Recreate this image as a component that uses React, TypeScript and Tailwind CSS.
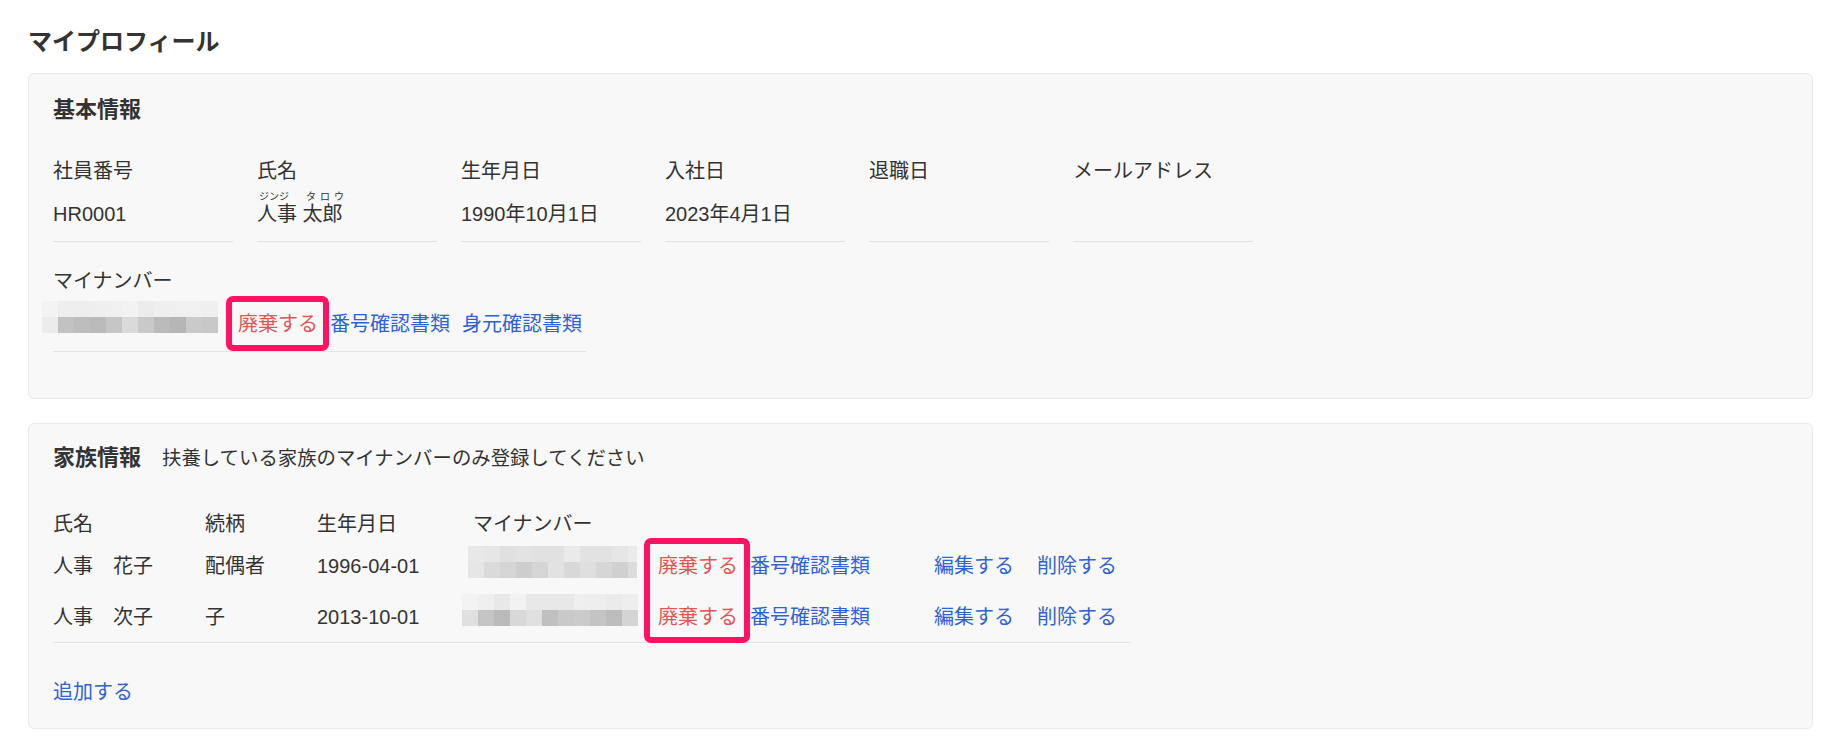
import React from "react";

const blurA = {
  top: ["#f3f3f3", "#eeeeee", "#eeeeee", "#efefef", "#f0f0f0", "#f2f2f2", "#ececec", "#efefef", "#f0f0f0", "#f0f0f0", "#efefef"],
  bottom: ["#ececec", "#c2c2c2", "#bdbdbd", "#bababa", "#c6c6c6", "#dadada", "#c9c9c9", "#bbbbbb", "#b6b6b6", "#cacaca", "#c8c8c8"],
  last: 16,
};
const blurB = {
  top: ["#e8e8e8", "#e6e6e6", "#e0e0e0", "#e3e3e3", "#e1e1e1", "#e1e1e1", "#eaeaea", "#e2e2e2", "#e2e2e2", "#e6e6e6", "#ebebeb"],
  bottom: ["#e6e6e6", "#dadada", "#d5d5d5", "#cdcdcd", "#d5d5d5", "#e2e2e2", "#d8d8d8", "#dfdfdf", "#d6d6d6", "#d0d0d0", "#dcdcdc"],
  last: 9,
};
const blurC = {
  top: ["#f3f3f3", "#efefef", "#e8e8e8", "#f2f2f2", "#e8e8e8", "#e8e8e8", "#e8e8e8", "#efefef", "#eeeeee", "#ebebeb", "#eeeeee"],
  bottom: ["#e0e0e0", "#c5c5c5", "#bababa", "#d8d8d8", "#e0e0e0", "#c0c0c0", "#c9c9c9", "#cbcbcb", "#c4c4c4", "#bdbdbd", "#d4d4d4"],
  last: 16,
};

function Pixels({ data }: { data: { top: string[]; bottom: string[]; last: number } }) {
  return (
    <div className="flex flex-col">
      {[data.top, data.bottom].map((row, r) => (
        <div key={r} className="flex">
          {row.map((c, i) => (
            <div
              key={i}
              className="h-4 shrink-0"
              style={{ backgroundColor: c, width: i === row.length - 1 ? data.last : 16 }}
            />
          ))}
        </div>
      ))}
    </div>
  );
}

function Field({ label, children }: { label: string; children?: React.ReactNode }) {
  return (
    <div className="w-[180px] shrink-0">
      <div className="leading-[30px]">{label}</div>
      <div className="h-[56px] border-b border-[#e2e2e2] pt-[13px] pb-[12px] leading-[30px] whitespace-nowrap">
        {children}
      </div>
    </div>
  );
}

const link = "text-[#2f63d3]";
const danger = "text-[#e05656]";

export default function App() {
  const rows = [
    { name: "人事　花子", rel: "配偶者", birth: "1996-04-01", blur: blurB, blurCls: "-ml-[5px] -mt-[7px]" },
    { name: "人事　次子", rel: "子", birth: "2013-10-01", blur: blurC, blurCls: "-ml-[11px] -mt-[13px]" },
  ];
  return (
    <div className="min-h-[744px] bg-white px-7 pt-[26px] text-[20px] text-[#333333] font-['Liberation_Sans','Noto_Sans_CJK_JP',sans-serif]">
      <h1 className="mb-[15px] text-[24px] leading-[32px] font-bold">マイプロフィール</h1>

      <section className="rounded-[6px] border border-[#e9e9e9] bg-[#f8f8f8] px-6 pt-5 pb-[46px]">
        <h2 className="text-[22px] leading-[32px] font-bold">基本情報</h2>
        <div className="mt-[30px] flex gap-6">
          <Field label="社員番号">HR0001</Field>
          <Field label="氏名">
            <span className="relative inline-block">
              人事 太郎
              <span className="absolute -top-[7px] left-[2px] flex whitespace-nowrap text-[10px] leading-[10px]">
                <span>ジンジ</span>
                <span className="ml-[17px] tracking-[4px]">タロウ</span>
              </span>
            </span>
          </Field>
          <Field label="生年月日">1990年10月1日</Field>
          <Field label="入社日">2023年4月1日</Field>
          <Field label="退職日" />
          <Field label="メールアドレス" />
        </div>
        <div className="mt-6 w-[533px]">
          <div className="leading-[30px]">マイナンバー</div>
          <div className="flex items-center border-b border-[#e2e2e2] pt-[13px] pb-[12px] leading-[30px] whitespace-nowrap">
            <div className="flex h-[30px] w-[185px] shrink-0 items-center">
              <div className="-ml-[11px] -mt-[14px]">
                <Pixels data={blurA} />
              </div>
            </div>
            <span className={`relative inline-block ${danger}`}>
              廃棄する
              <span className="pointer-events-none absolute -top-[13px] -bottom-[12px] -left-[12px] -right-[11px] rounded-[7px] border-[6px] border-[#ff1262]" />
            </span>
            <span className={`ml-3 ${link}`}>番号確認書類</span>
            <span className={`ml-3 ${link}`}>身元確認書類</span>
          </div>
        </div>
      </section>

      <section className="mt-6 rounded-[6px] border border-[#e9e9e9] bg-[#f8f8f8] px-6 pt-[18px] pb-[21px]">
        <div className="flex items-baseline">
          <h2 className="text-[22px] leading-[32px] font-bold">家族情報</h2>
          <span className="ml-[21px] text-[19.4px]">扶養している家族のマイナンバーのみ登録してください</span>
        </div>
        <div className="mt-[34px] w-[1078px]">
          <div className="grid h-[32px] grid-cols-[152px_112px_156px_461px_197px] items-center leading-[30px]">
            <div>氏名</div>
            <div>続柄</div>
            <div>生年月日</div>
            <div>マイナンバー</div>
            <div />
          </div>
          <div className="relative border-b border-[#e2e2e2]">
            {rows.map((r, i) => (
              <div
                key={i}
                className="grid h-[51px] grid-cols-[152px_112px_156px_461px_197px] items-center leading-[30px] whitespace-nowrap"
              >
                <div>{r.name}</div>
                <div>{r.rel}</div>
                <div>{r.birth}</div>
                <div className="flex h-[51px] items-center">
                  <div className="flex h-[51px] w-[185px] shrink-0 items-center">
                    <div className={r.blurCls}>
                      <Pixels data={r.blur} />
                    </div>
                  </div>
                  <span className={danger}>廃棄する</span>
                  <span className={`ml-3 ${link}`}>番号確認書類</span>
                </div>
                <div className="flex gap-[23px]">
                  <span className={link}>編集する</span>
                  <span className={link}>削除する</span>
                </div>
              </div>
            ))}
            <div className="pointer-events-none absolute -top-[2px] left-[591px] h-[105px] w-[106px] rounded-[7px] border-[6px] border-[#ff1262]" />
          </div>
        </div>
        <div className={`mt-[34px] leading-[30px] ${link}`}>追加する</div>
      </section>
    </div>
  );
}
